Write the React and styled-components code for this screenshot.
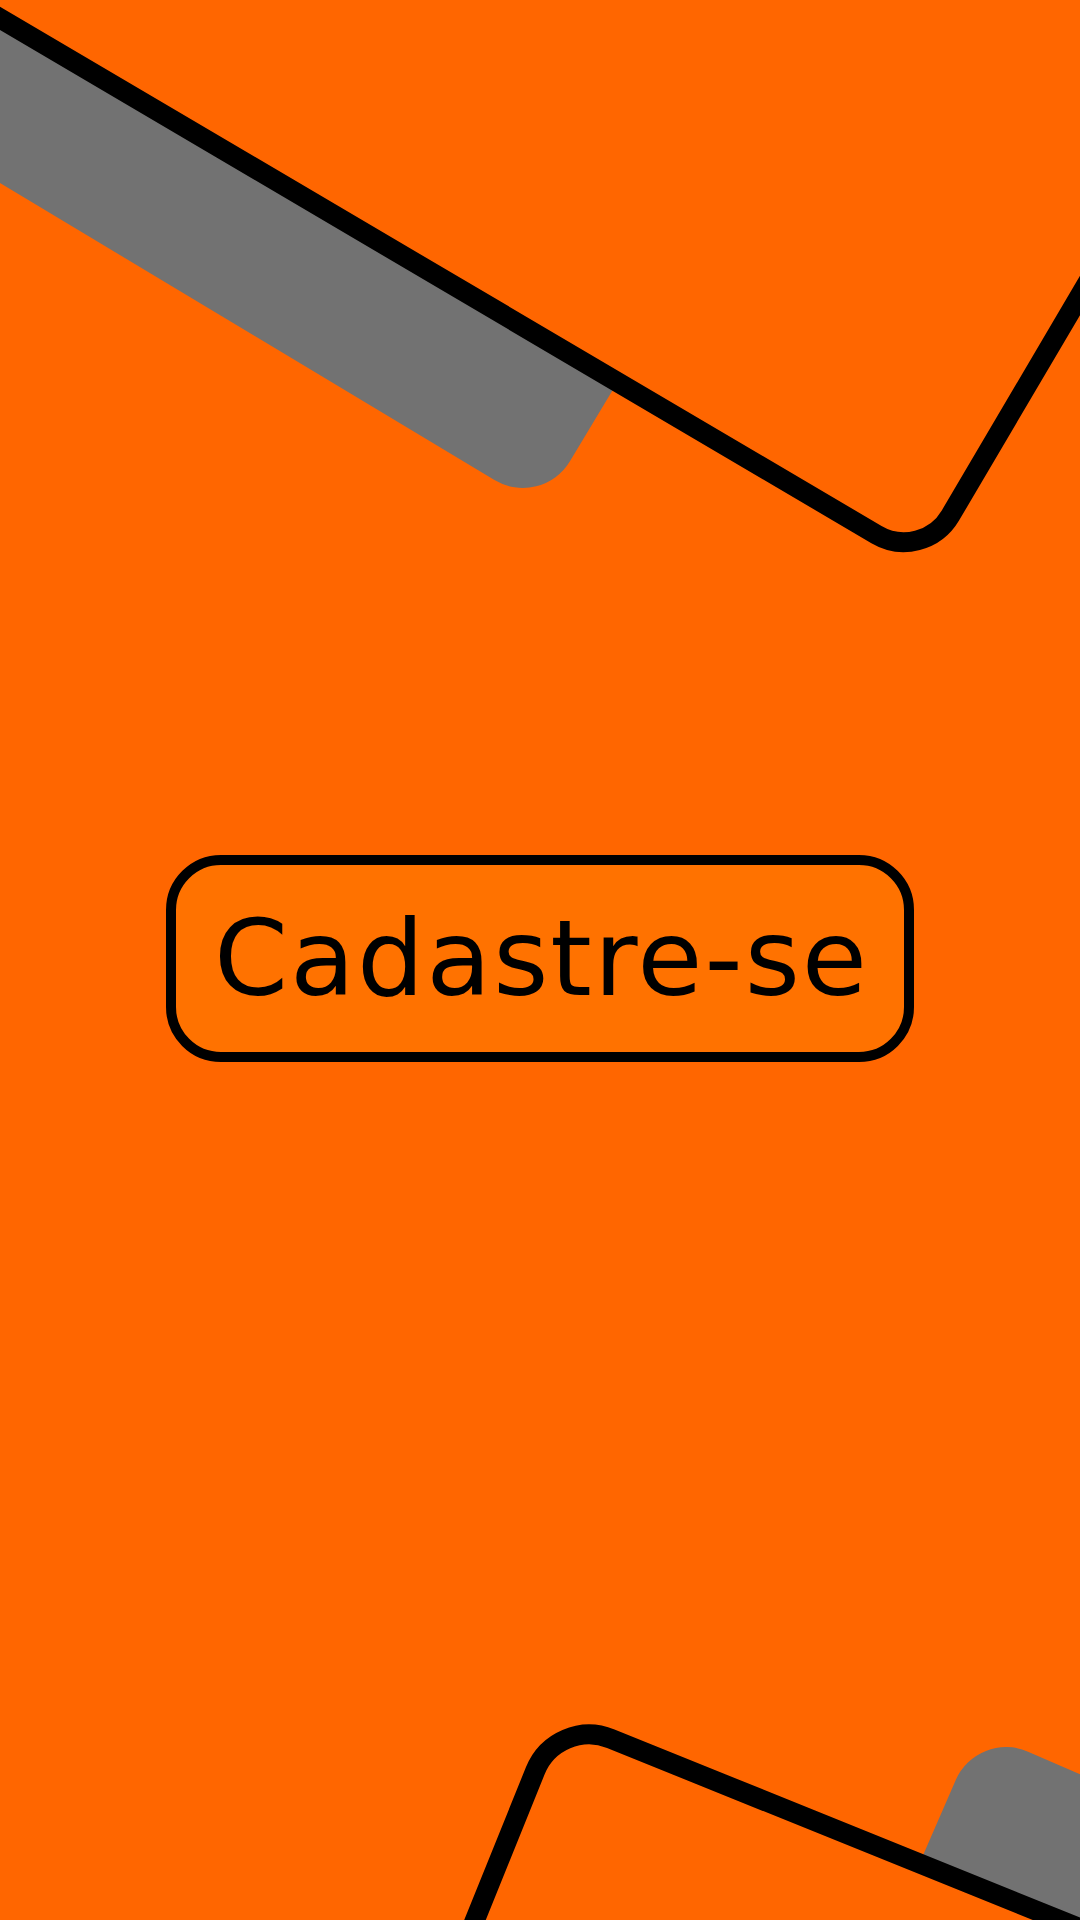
import React from 'react';
import styled, { createGlobalStyle } from 'styled-components';

const GlobalStyle = createGlobalStyle`
  html, body {
    margin: 0;
    padding: 0;
    background: #ff6600;
  }
`;

const Page = styled.div`
  position: relative;
  width: 1080px;
  height: 1920px;
  overflow: hidden;
  display: flex;
  align-items: center;
  justify-content: center;
  background: #ff6600;
`;

// decorative slabs behind the button
const Backdrop = styled.svg`
  position: absolute;
  inset: 0;
  width: 1080px;
  height: 1920px;
  pointer-events: none;
`;

const SignUpButton = styled.button`
  position: relative;
  z-index: 1;
  box-sizing: border-box;
  width: 748px;
  height: 207px;
  margin-bottom: 3px;
  padding: 0 0 0 3px;
  border: 10px solid #000;
  border-radius: 55px;
  background: #ff7200;
  color: #000;
  font-family: 'DejaVu Sans', 'Liberation Sans', sans-serif;
  font-size: 106px;
  font-weight: 400;
  letter-spacing: 2px;
  line-height: 1;
  cursor: pointer;
`;

const Slab = ({ x, y, angle, w, h, r, fill, stroke, anchor }) => {
  // anchor tells which rect corner sits on (x, y)
  const rx = anchor === 'bottom-right' ? -w : 0;
  const ry = anchor === 'bottom-right' ? -h : 0;
  return (
    <g transform={`translate(${x} ${y}) rotate(${angle})`}>
      <rect
        x={rx}
        y={ry}
        width={w}
        height={h}
        rx={r}
        fill={fill}
        stroke={stroke || 'none'}
        strokeWidth={stroke ? 20 : 0}
      />
    </g>
  );
};

export default function App() {
  return (
    <>
      <GlobalStyle />
      <Page>
        <Backdrop viewBox="0 0 1080 1920">
          <Slab x={541.6} y={508.4} angle={31} w={1500} h={400} r={55} fill="#727272" anchor="bottom-right" />
          <Slab x={923} y={562} angle={30.5} w={1500} h={1500} r={54} fill="#ff6600" stroke="#000" anchor="bottom-right" />
          <Slab x={977.6} y={1729.7} angle={23.5} w={600} h={600} r={55} fill="#727272" />
          <Slab x={557} y={1717} angle={22} w={1200} h={800} r={58} fill="#ff6600" stroke="#000" />
        </Backdrop>
        <SignUpButton type="button">Cadastre-se</SignUpButton>
      </Page>
    </>
  );
}
